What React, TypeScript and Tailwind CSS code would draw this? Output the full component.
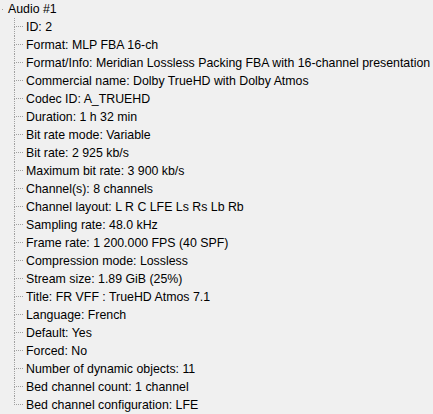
const items = [
  "ID: 2",
  "Format: MLP FBA 16-ch",
  "Format/Info: Meridian Lossless Packing FBA with 16-channel presentation",
  "Commercial name: Dolby TrueHD with Dolby Atmos",
  "Codec ID: A_TRUEHD",
  "Duration: 1 h 32 min",
  "Bit rate mode: Variable",
  "Bit rate: 2 925 kb/s",
  "Maximum bit rate: 3 900 kb/s",
  "Channel(s): 8 channels",
  "Channel layout: L R C LFE Ls Rs Lb Rb",
  "Sampling rate: 48.0 kHz",
  "Frame rate: 1 200.000 FPS (40 SPF)",
  "Compression mode: Lossless",
  "Stream size: 1.89 GiB (25%)",
  "Title: FR VFF : TrueHD Atmos 7.1",
  "Language: French",
  "Default: Yes",
  "Forced: No",
  "Number of dynamic objects: 11",
  "Bed channel count: 1 channel",
  "Bed channel configuration: LFE",
];

export default function App() {
  return (
    <div className="w-[433px] h-[414px] bg-[#f0f0f0] overflow-hidden font-['Liberation_Sans',Arial,sans-serif] text-[12.35px] text-black leading-none">
      {/* root node */}
      <div className="flex h-[18px] items-center">
        <div className="ml-[2px] w-px h-px bg-[#a0a0a0]" />
        <span className="ml-[5px] whitespace-nowrap">Audio #1</span>
      </div>

      {/* children */}
      {items.map((text, i) => {
        const last = i === items.length - 1;
        return (
          <div key={i} className="flex h-[18px] items-center">
            <div className="ml-[14px] w-[9px] h-full flex flex-col shrink-0">
              <div className="h-[9px] border-l border-b border-dotted border-[#a0a0a0]" />
              {!last && <div className="flex-1 border-l border-dotted border-[#a0a0a0]" />}
            </div>
            <span className="ml-[3px] whitespace-nowrap">{text}</span>
          </div>
        );
      })}
    </div>
  );
}
